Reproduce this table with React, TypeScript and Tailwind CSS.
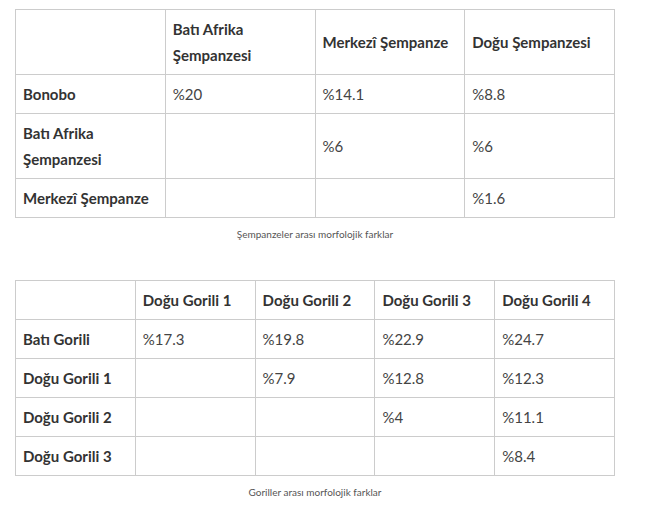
import React from "react";

const th = "border border-[#cccccc] px-[7px] py-[6px] text-left font-bold text-[#333333] align-middle";
const td = "border border-[#cccccc] px-[7px] py-[6px] text-left text-[#444444] align-middle";
const rh = "border border-[#cccccc] px-[7px] py-[6px] text-left font-bold text-[#333333] align-middle whitespace-nowrap";

export default function App() {
  return (
    <div className="w-[653px] h-[511px] bg-white" style={{ fontFamily: "Lato, 'Noto Sans', sans-serif" }}>
      <div className="pl-[15px] pt-[9px] w-[615px]">
        <table className="table-fixed border-collapse w-[600px] text-[15px] leading-[26px]">
          <tbody>
            <tr>
              <td className={th}></td>
              <td className={th}>Batı Afrika<br />Şempanzesi</td>
              <td className={th + " whitespace-nowrap"}>Merkezî Şempanze</td>
              <td className={th + " whitespace-nowrap"}>Doğu Şempanzesi</td>
            </tr>
            <tr>
              <td className={rh}>Bonobo</td>
              <td className={td}>%20</td>
              <td className={td}>%14.1</td>
              <td className={td}>%8.8</td>
            </tr>
            <tr>
              <td className={rh}>Batı Afrika<br />Şempanzesi</td>
              <td className={td}></td>
              <td className={td}>%6</td>
              <td className={td}>%6</td>
            </tr>
            <tr>
              <td className={rh}>Merkezî Şempanze</td>
              <td className={td}></td>
              <td className={td}></td>
              <td className={td}>%1.6</td>
            </tr>
          </tbody>
        </table>
        <div className="w-[600px] text-center text-[10px] leading-[14px] text-[#555555] pt-[9px]">Şempanzeler arası morfolojik farklar</div>
        <table className="mt-[39px] table-fixed border-collapse w-[600px] text-[15px] leading-[26px]">
          <tbody>
            <tr>
              <td className={th}></td>
              <td className={th + " whitespace-nowrap"}>Doğu Gorili 1</td>
              <td className={th + " whitespace-nowrap"}>Doğu Gorili 2</td>
              <td className={th + " whitespace-nowrap"}>Doğu Gorili 3</td>
              <td className={th + " whitespace-nowrap"}>Doğu Gorili 4</td>
            </tr>
            <tr>
              <td className={rh}>Batı Gorili</td>
              <td className={td}>%17.3</td>
              <td className={td}>%19.8</td>
              <td className={td}>%22.9</td>
              <td className={td}>%24.7</td>
            </tr>
            <tr>
              <td className={rh}>Doğu Gorili 1</td>
              <td className={td}></td>
              <td className={td}>%7.9</td>
              <td className={td}>%12.8</td>
              <td className={td}>%12.3</td>
            </tr>
            <tr>
              <td className={rh}>Doğu Gorili 2</td>
              <td className={td}></td>
              <td className={td}></td>
              <td className={td}>%4</td>
              <td className={td}>%11.1</td>
            </tr>
            <tr>
              <td className={rh}>Doğu Gorili 3</td>
              <td className={td}></td>
              <td className={td}></td>
              <td className={td}></td>
              <td className={td}>%8.4</td>
            </tr>
          </tbody>
        </table>
        <div className="w-[600px] text-center text-[10px] leading-[14px] text-[#555555] pt-[9px]">Goriller arası morfolojik farklar</div>
      </div>
    </div>
  );
}
